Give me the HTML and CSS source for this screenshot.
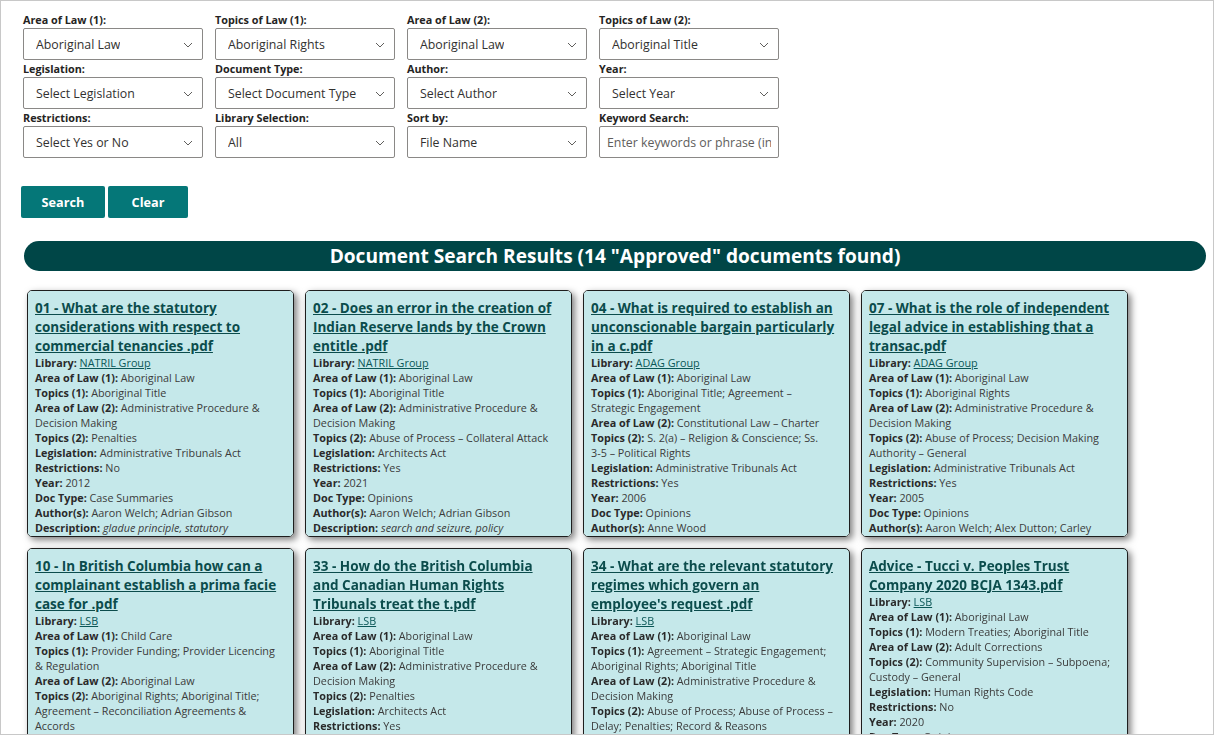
FILE: index.html
```html
<!DOCTYPE html>
<html lang="en">
<head>
<meta charset="utf-8">
<title>Document Search</title>
<link rel="stylesheet" href="styles.css">
</head>
<body>
<div class="frame">
  <form class="filters">
    <div class="filter-grid">
      <div class="field"><label>Area of Law (1):</label><div class="select"><span>Aboriginal Law</span><svg class="chev" viewBox="0 0 10 6"><path d="M1 1l4 4 4-4"/></svg></div></div>
      <div class="field"><label>Topics of Law (1):</label><div class="select"><span>Aboriginal Rights</span><svg class="chev" viewBox="0 0 10 6"><path d="M1 1l4 4 4-4"/></svg></div></div>
      <div class="field"><label>Area of Law (2):</label><div class="select"><span>Aboriginal Law</span><svg class="chev" viewBox="0 0 10 6"><path d="M1 1l4 4 4-4"/></svg></div></div>
      <div class="field"><label>Topics of Law (2):</label><div class="select"><span>Aboriginal Title</span><svg class="chev" viewBox="0 0 10 6"><path d="M1 1l4 4 4-4"/></svg></div></div>

      <div class="field"><label>Legislation:</label><div class="select"><span>Select Legislation</span><svg class="chev" viewBox="0 0 10 6"><path d="M1 1l4 4 4-4"/></svg></div></div>
      <div class="field"><label>Document Type:</label><div class="select"><span>Select Document Type</span><svg class="chev" viewBox="0 0 10 6"><path d="M1 1l4 4 4-4"/></svg></div></div>
      <div class="field"><label>Author:</label><div class="select"><span>Select Author</span><svg class="chev" viewBox="0 0 10 6"><path d="M1 1l4 4 4-4"/></svg></div></div>
      <div class="field"><label>Year:</label><div class="select"><span>Select Year</span><svg class="chev" viewBox="0 0 10 6"><path d="M1 1l4 4 4-4"/></svg></div></div>

      <div class="field"><label>Restrictions:</label><div class="select"><span>Select Yes or No</span><svg class="chev" viewBox="0 0 10 6"><path d="M1 1l4 4 4-4"/></svg></div></div>
      <div class="field"><label>Library Selection:</label><div class="select"><span>All</span><svg class="chev" viewBox="0 0 10 6"><path d="M1 1l4 4 4-4"/></svg></div></div>
      <div class="field"><label>Sort by:</label><div class="select"><span>File Name</span><svg class="chev" viewBox="0 0 10 6"><path d="M1 1l4 4 4-4"/></svg></div></div>
      <div class="field"><label>Keyword Search:</label><input class="text-input" type="text" placeholder="Enter keywords or phrase (in quotes for exact match)"></div>
    </div>
    <div class="actions">
      <button type="button" class="btn btn-search">Search</button>
      <button type="button" class="btn btn-clear">Clear</button>
    </div>
  </form>

  <h2 class="results-bar">Document Search Results (14 "Approved" documents found)</h2>

  <div class="cards">
    <div class="card">
      <a class="card-title" href="#">01 - What are the statutory considerations with respect to commercial tenancies .pdf</a>
      <p><b>Library:</b> <a class="lib" href="#">NATRIL Group</a></p>
      <p><b>Area of Law (1):</b> Aboriginal Law</p>
      <p><b>Topics (1):</b> Aboriginal Title</p>
      <p><b>Area of Law (2):</b> Administrative Procedure &amp; Decision Making</p>
      <p><b>Topics (2):</b> Penalties</p>
      <p><b>Legislation:</b> Administrative Tribunals Act</p>
      <p><b>Restrictions:</b> No</p>
      <p><b>Year:</b> 2012</p>
      <p><b>Doc Type:</b> Case Summaries</p>
      <p><b>Author(s):</b> Aaron Welch; Adrian Gibson</p>
      <p><b>Description:</b> <i>gladue principle, statutory interpretation, sentencing</i></p>
    </div>

    <div class="card">
      <a class="card-title" href="#">02 - Does an error in the creation of Indian Reserve lands by the Crown entitle .pdf</a>
      <p><b>Library:</b> <a class="lib" href="#">NATRIL Group</a></p>
      <p><b>Area of Law (1):</b> Aboriginal Law</p>
      <p><b>Topics (1):</b> Aboriginal Title</p>
      <p><b>Area of Law (2):</b> Administrative Procedure &amp; Decision Making</p>
      <p><b>Topics (2):</b> Abuse of Process – Collateral Attack</p>
      <p><b>Legislation:</b> Architects Act</p>
      <p><b>Restrictions:</b> Yes</p>
      <p><b>Year:</b> 2021</p>
      <p><b>Doc Type:</b> Opinions</p>
      <p><b>Author(s):</b> Aaron Welch; Adrian Gibson</p>
      <p><b>Description:</b> <i>search and seizure, policy considerations, fiduciary duty</i></p>
    </div>

    <div class="card">
      <a class="card-title" href="#">04 - What is required to establish an unconscionable bargain particularly in a c.pdf</a>
      <p><b>Library:</b> <a class="lib" href="#">ADAG Group</a></p>
      <p><b>Area of Law (1):</b> Aboriginal Law</p>
      <p><b>Topics (1):</b> Aboriginal Title; Agreement – Strategic Engagement</p>
      <p><b>Area of Law (2):</b> Constitutional Law – Charter</p>
      <p><b>Topics (2):</b> S. 2(a) – Religion &amp; Conscience; Ss. <span class="nw">3-5</span> – Political Rights</p>
      <p><b>Legislation:</b> Administrative Tribunals Act</p>
      <p><b>Restrictions:</b> Yes</p>
      <p><b>Year:</b> 2006</p>
      <p><b>Doc Type:</b> Opinions</p>
      <p><b>Author(s):</b> Anne Wood</p>
      <p><b>Description:</b> <i>unconscionability, contracts</i></p>
    </div>

    <div class="card">
      <a class="card-title" href="#">07 - What is the role of independent legal advice in establishing that a transac.pdf</a>
      <p><b>Library:</b> <a class="lib" href="#">ADAG Group</a></p>
      <p><b>Area of Law (1):</b> Aboriginal Law</p>
      <p><b>Topics (1):</b> Aboriginal Rights</p>
      <p><b>Area of Law (2):</b> Administrative Procedure &amp; Decision Making</p>
      <p><b>Topics (2):</b> Abuse of Process; Decision Making Authority – General</p>
      <p><b>Legislation:</b> Administrative Tribunals Act</p>
      <p><b>Restrictions:</b> Yes</p>
      <p><b>Year:</b> 2005</p>
      <p><b>Doc Type:</b> Opinions</p>
      <p><b>Author(s):</b> Aaron Welch; Alex Dutton; Carley Simpson</p>
      <p><b>Description:</b> <i>independent legal advice</i></p>
    </div>

    <div class="card">
      <a class="card-title" href="#">10 - In British Columbia how can a complainant establish a prima facie case for .pdf</a>
      <p><b>Library:</b> <a class="lib" href="#">LSB</a></p>
      <p><b>Area of Law (1):</b> Child Care</p>
      <p><b>Topics (1):</b> Provider Funding; Provider Licencing<br>&amp; Regulation</p>
      <p><b>Area of Law (2):</b> Aboriginal Law</p>
      <p><b>Topics (2):</b> Aboriginal Rights; Aboriginal Title; Agreement – Reconciliation Agreements &amp; Accords</p>
      <p><b>Legislation:</b> Human Rights Code</p>
      <p><b>Restrictions:</b> No</p>
      <p><b>Year:</b> 2019</p>
      <p><b>Doc Type:</b> Opinions</p>
    </div>

    <div class="card">
      <a class="card-title" href="#">33 - How do the British Columbia and Canadian Human Rights Tribunals treat the t.pdf</a>
      <p><b>Library:</b> <a class="lib" href="#">LSB</a></p>
      <p><b>Area of Law (1):</b> Aboriginal Law</p>
      <p><b>Topics (1):</b> Aboriginal Title</p>
      <p><b>Area of Law (2):</b> Administrative Procedure &amp; Decision Making</p>
      <p><b>Topics (2):</b> Penalties</p>
      <p><b>Legislation:</b> Architects Act</p>
      <p><b>Restrictions:</b> Yes</p>
      <p><b>Year:</b> 2018</p>
      <p><b>Doc Type:</b> Opinions</p>
    </div>

    <div class="card">
      <a class="card-title" href="#">34 - What are the relevant statutory regimes which govern an employee's request .pdf</a>
      <p><b>Library:</b> <a class="lib" href="#">LSB</a></p>
      <p><b>Area of Law (1):</b> Aboriginal Law</p>
      <p><b>Topics (1):</b> Agreement – Strategic Engagement; Aboriginal Rights; Aboriginal Title</p>
      <p><b>Area of Law (2):</b> Administrative Procedure &amp; Decision Making</p>
      <p><b>Topics (2):</b> Abuse of Process; Abuse of Process – Delay; Penalties; Record &amp; Reasons</p>
      <p><b>Legislation:</b> Administrative Tribunals Act</p>
      <p><b>Restrictions:</b> No</p>
      <p><b>Year:</b> 2017</p>
    </div>

    <div class="card">
      <a class="card-title" href="#">Advice - Tucci v. Peoples Trust Company 2020 BCJA 1343.pdf</a>
      <p><b>Library:</b> <a class="lib" href="#">LSB</a></p>
      <p><b>Area of Law (1):</b> Aboriginal Law</p>
      <p><b>Topics (1):</b> Modern Treaties; Aboriginal Title</p>
      <p><b>Area of Law (2):</b> Adult Corrections</p>
      <p><b>Topics (2):</b> Community Supervision – Subpoena; Custody – General</p>
      <p><b>Legislation:</b> Human Rights Code</p>
      <p><b>Restrictions:</b> No</p>
      <p><b>Year:</b> 2020</p>
      <p><b>Doc Type:</b> Opinions</p>
      <p><b>Author(s):</b> Aaron Welch</p>
    </div>
  </div>
</div>
</body>
</html>
```

FILE: styles.css
```css
* { box-sizing: border-box; }

html, body {
  margin: 0;
  padding: 0;
  background: #ffffff;
}

body {
  font-family: "Open Sans", "Noto Sans", sans-serif;
  color: #333333;
}

.frame {
  width: 1214px;
  height: 735px;
  border: 1px solid #c8c8c8;
  overflow: hidden;
  padding: 10px 0 0 22px;
}

/* ---------- filters ---------- */
.filter-grid {
  display: grid;
  grid-template-columns: repeat(4, 180px);
  column-gap: 12px;
}

.field {
  display: flex;
  flex-direction: column;
}

.field label {
  font-size: 10.8px;
  font-weight: 700;
  line-height: 17px;
  height: 17px;
  color: #252423;
}

.select {
  height: 32px;
  border: 1px solid #8a8886;
  border-radius: 2px;
  display: flex;
  align-items: center;
  justify-content: space-between;
  padding: 1px 9px 0 12px;
  font-size: 12.35px;
  color: #323130;
  background: #ffffff;
}

.select span {
  white-space: nowrap;
  overflow: hidden;
}

.chev {
  width: 10px;
  height: 6px;
  flex: none;
}

.chev path {
  fill: none;
  stroke: #605e5c;
  stroke-width: 1;
}

.text-input {
  height: 32px;
  width: 180px;
  border: 1px solid #8a8886;
  border-radius: 2px;
  padding: 1px 7px 0;
  font-family: "Open Sans", "Noto Sans", sans-serif;
  font-size: 12.35px;
  color: #323130;
  outline: none;
}

.text-input::placeholder {
  color: #605e5c;
}

.actions {
  display: flex;
  gap: 3px;
  margin: 28px 0 0 -2px;
}

.btn {
  height: 32px;
  border: none;
  border-radius: 2px;
  background: #057778;
  color: #ffffff;
  font-family: "Open Sans", "Noto Sans", sans-serif;
  font-size: 12.7px;
  font-weight: 700;
  padding: 0;
  cursor: pointer;
}

.btn-search { width: 84px; }
.btn-clear { width: 80px; }

/* ---------- results header ---------- */
.results-bar {
  margin: 23px 0 0 1px;
  width: 1182px;
  height: 30px;
  border-radius: 15px;
  background: #004647;
  color: #ffffff;
  font-size: 19.1px;
  font-weight: 700;
  line-height: 30px;
  text-align: center;
}

/* ---------- cards ---------- */
.cards {
  display: grid;
  grid-template-columns: repeat(4, 267px);
  grid-auto-rows: 247px;
  gap: 11px;
  margin: 19px 0 0 4px;
}

.card {
  background: #c5e8ea;
  border: 1px solid #1e1e1e;
  border-radius: 5px;
  box-shadow: 3px 3px 7px rgba(0, 0, 0, 0.5);
  padding: 8px 13px 8px 7px;
  overflow-y: scroll;
}

.card::-webkit-scrollbar {
  width: 9px;
}

.card::-webkit-scrollbar-track {
  background: #d6e2e2;
  border-radius: 5px;
}

.card::-webkit-scrollbar-thumb {
  background: #006b6b;
  border-radius: 5px;
}

.card-title {
  display: block;
  font-size: 13.5px;
  font-weight: 700;
  line-height: 19px;
  color: #0b4c4c;
  text-decoration: underline;
  margin-bottom: -1px;
}

.card p {
  margin: 0;
  font-size: 10.8px;
  line-height: 15px;
  color: #3b3b3b;
}

.card p b {
  font-weight: 700;
  color: #2a2a2a;
}

.card p i {
  font-style: italic;
}

.nw {
  white-space: nowrap;
}

.lib {
  color: #0b5757;
  text-decoration: underline;
}
```
